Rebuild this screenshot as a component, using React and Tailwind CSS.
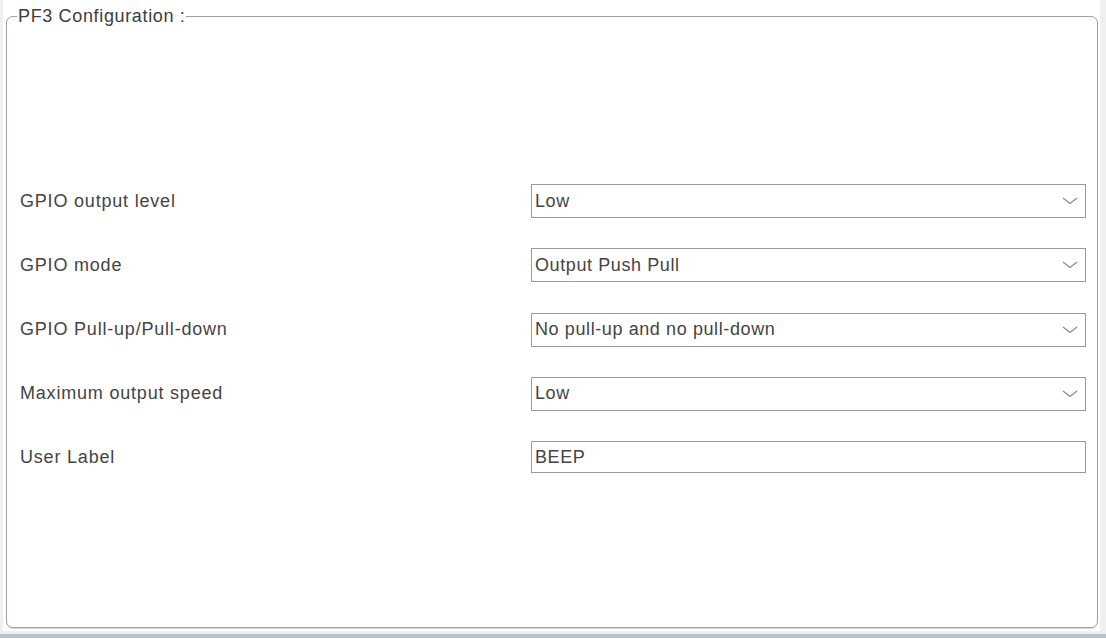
import React from 'react'

const font = { fontFamily: '"Liberation Sans", Arial, sans-serif' }

const rows = [
  { label: 'GPIO output level', value: 'Low', type: 'select' },
  { label: 'GPIO mode', value: 'Output Push Pull', type: 'select' },
  { label: 'GPIO Pull-up/Pull-down', value: 'No pull-up and no pull-down', type: 'select' },
  { label: 'Maximum output speed', value: 'Low', type: 'select' },
  { label: 'User Label', value: 'BEEP', type: 'text' },
]

function Chevron() {
  return (
    <svg width="16" height="8" viewBox="0 0 16 8" className="shrink-0">
      <path d="M1 1 L8 6.5 L15 1" fill="none" stroke="#8a8a8a" strokeWidth="1.3" />
    </svg>
  )
}

function Field({ row }) {
  if (row.type === 'text') {
    return (
      <div className="h-[32px] border border-[#9b9b9b] bg-white flex items-center pl-[3px] text-[18px] tracking-[0.6px] text-[#444]">
        {row.value}
      </div>
    )
  }
  return (
    <div className="h-[34px] border border-[#9b9b9b] bg-white flex items-center justify-between pl-[3px] pr-[7px] text-[18px] tracking-[0.6px] text-[#444]">
      <span>{row.value}</span>
      <Chevron />
    </div>
  )
}

export default function App() {
  return (
    <div className="w-[1106px] h-[638px] bg-[#f0f0f1] flex flex-col overflow-hidden" style={font}>
      <div className="flex-1 flex min-h-0">
        <div className="w-[3px]" />
        <div className="flex-1 bg-white pt-[6px] pl-[3px] pr-[2px] pb-[3px] flex flex-col">
          <fieldset className="flex-1 border border-[#9aa0a6] rounded-[7px] pl-[13px] pr-[11px] shadow-[0_1px_0_#d3d7db]">
            <legend className="ml-[-3px] px-[1px] text-[18px] tracking-[0.65px] text-[#3c3c3c] leading-[20px]">
              PF3 Configuration :
            </legend>
            <div className="pt-[158px] flex flex-col gap-[30.25px]">
              {rows.map((r) => (
                <div key={r.label} className="grid grid-cols-[511px_1fr] items-center">
                  <div className="text-[18px] tracking-[0.8px] text-[#444]">{r.label}</div>
                  <Field row={r} />
                </div>
              ))}
            </div>
          </fieldset>
        </div>
        <div className="w-[6px]" />
      </div>
      <div className="h-[3px]" />
      <div className="h-[4px] bg-[#b8c3cb]" />
    </div>
  )
}
